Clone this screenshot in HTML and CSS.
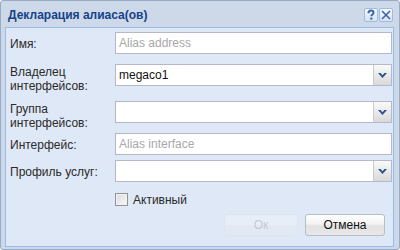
FILE: index.html
```html
<!DOCTYPE html>
<html>
<head>
<meta charset="utf-8">
<link rel="stylesheet" href="styles.css">
</head>
<body>
<div class="window">
  <div class="header">
    <span class="title">Декларация алиаса(ов)</span>
    <div class="tools">
      <span class="tool"><svg width="12" height="12" viewBox="0 0 12 12"><path d="M3.5 4.2 C3.5 2.4 4.6 1.6 6 1.6 C7.5 1.6 8.5 2.5 8.5 3.7 C8.5 5.4 6.3 5.5 6.3 7.3" fill="none" stroke="#3d64a8" stroke-width="2"/><rect x="5.2" y="8.6" width="2.2" height="2" fill="#3d64a8"/></svg></span>
      <span class="tool"><svg width="12" height="12" viewBox="0 0 12 12"><path d="M2 2 L10 10 M10 2 L2 10" stroke="#3d64a8" stroke-width="1.6"/></svg></span>
    </div>
  </div>
  <div class="body">
    <div class="row gap-10">
      <label class="label">Имя:</label>
      <div class="field"><span class="placeholder">Alias address</span></div>
    </div>
    <div class="row gap-8">
      <label class="label two">Владелец интерфейсов:</label>
      <div class="field combo"><span class="value">megaco1</span><span class="trigger"><svg width="9" height="5" viewBox="0 0 9 5"><polygon points="0,0 2.6,0 4.5,2.2 6.4,0 9,0 4.5,5" fill="#2c4f8e"/></svg></span></div>
    </div>
    <div class="row gap-3">
      <label class="label two">Группа интерфейсов:</label>
      <div class="field combo"><span class="value"></span><span class="trigger"><svg width="9" height="5" viewBox="0 0 9 5"><polygon points="0,0 2.6,0 4.5,2.2 6.4,0 9,0 4.5,5" fill="#2c4f8e"/></svg></span></div>
    </div>
    <div class="row gap-5">
      <label class="label">Интерфейс:</label>
      <div class="field"><span class="placeholder">Alias interface</span></div>
    </div>
    <div class="row gap-11">
      <label class="label">Профиль услуг:</label>
      <div class="field combo"><span class="value"></span><span class="trigger"><svg width="9" height="5" viewBox="0 0 9 5"><polygon points="0,0 2.6,0 4.5,2.2 6.4,0 9,0 4.5,5" fill="#2c4f8e"/></svg></span></div>
    </div>
    <div class="check-row">
      <span class="checkbox"></span>
      <span class="check-label">Активный</span>
    </div>
    <div class="buttons">
      <span class="btn disabled">Ок</span>
      <span class="btn">Отмена</span>
    </div>
  </div>
</div>
</body>
</html>
```
FILE: styles.css
```css
html, body {
  margin: 0;
  padding: 0;
}
body {
  width: 400px;
  height: 250px;
  overflow: hidden;
  font-family: "Liberation Sans", Arial, sans-serif;
  font-size: 12px;
  color: #2a2a2a;
}
.window {
  box-sizing: border-box;
  width: 400px;
  height: 250px;
  border: 1px solid #99abc6;
  border-radius: 3px;
  background: #cdd9e8;
  display: flex;
  flex-direction: column;
  padding: 0 5px 2px 4px;
}
.header {
  height: 26px;
  display: flex;
  align-items: center;
  justify-content: space-between;
  flex-shrink: 0;
}
.title {
  font-weight: bold;
  font-size: 12px;
  color: #15428b;
  padding-left: 3px;
  padding-top: 1px;
}
.tools {
  display: flex;
  gap: 1px;
  margin-right: 1px;
  padding-top: 1px;
}
.tool {
  box-sizing: border-box;
  width: 14px;
  height: 14px;
  border: 1px solid #9fbbe0;
  border-radius: 2px;
  background: linear-gradient(#f4f8fd, #d6e3f4);
  display: flex;
  align-items: center;
  justify-content: center;
}
.body {
  flex: 1;
  border: 1px solid #99bbe8;
  background: #dfe8f6;
  padding: 4px 1px 0 4px;
  display: flex;
  flex-direction: column;
}
.row {
  display: flex;
  align-items: flex-start;
}
.gap-10 { margin-bottom: 10px; }
.gap-8 { margin-bottom: 8px; }
.gap-3 { margin-bottom: 3px; }
.gap-5 { margin-bottom: 5px; }
.gap-11 { margin-bottom: 11px; }
.label {
  width: 105px;
  flex-shrink: 0;
  line-height: 14px;
  padding-top: 5px;
  color: #2a2a2a;
}
.label.two {
  padding-top: 1px;
  width: 90px;
  margin-right: 15px;
}
.field {
  box-sizing: border-box;
  flex: 1;
  height: 22px;
  border: 1px solid #b5b8c8;
  background: #fff;
  display: flex;
  align-items: center;
  padding-left: 3px;
}
.placeholder {
  color: #a8a8a8;
}
.value {
  flex: 1;
  color: #111;
}
.trigger {
  box-sizing: border-box;
  width: 18px;
  height: 20px;
  margin-left: auto;
  border-left: 1px solid #c8ccd6;
  background: linear-gradient(#fafafa, #d9d9d9);
  display: flex;
  align-items: center;
  justify-content: center;
}
.check-row {
  display: flex;
  align-items: center;
  padding-left: 105px;
  height: 13px;
}
.checkbox {
  box-sizing: border-box;
  width: 13px;
  height: 13px;
  border: 1px solid #939393;
  background: linear-gradient(135deg, #dcdcdc, #f8f8f8);
  box-shadow: inset 0 0 0 1px #f2f2f2;
}
.check-label {
  margin-left: 5px;
  color: #2a2a2a;
}
.buttons {
  display: flex;
  justify-content: flex-end;
  gap: 7px;
  margin-top: 8px;
  padding-right: 7px;
}
.btn {
  box-sizing: border-box;
  height: 22px;
  width: 80px;
  border: 1px solid #b8bcc4;
  border-radius: 3px;
  background: linear-gradient(#ffffff 0%, #f2f2f2 45%, #e2e2e2 55%, #e8e8e8 100%);
  display: flex;
  align-items: center;
  justify-content: center;
  color: #111;
}
.btn.disabled {
  width: 74px;
  border-color: #dde5f0;
  background: linear-gradient(#e8eef7 0%, #e8eef7 50%, #e2e9f3 50%, #e2e9f3 100%);
  color: #c3cad4;
}
```
